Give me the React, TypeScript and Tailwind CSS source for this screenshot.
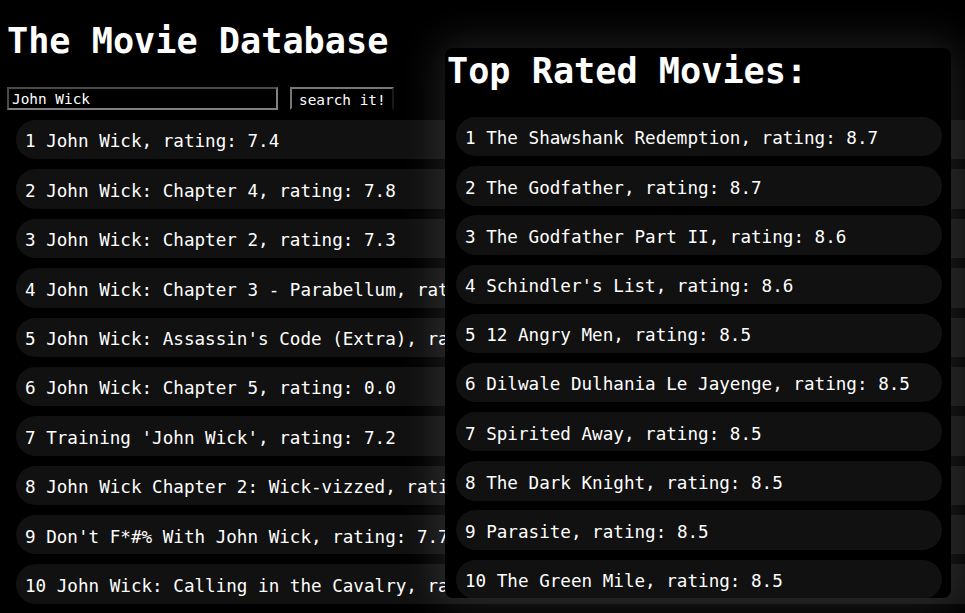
import React from 'react'

const searchResults = [
  { title: 'John Wick', rating: '7.4' },
  { title: 'John Wick: Chapter 4', rating: '7.8' },
  { title: 'John Wick: Chapter 2', rating: '7.3' },
  { title: 'John Wick: Chapter 3 - Parabellum', rating: '7.4' },
  { title: "John Wick: Assassin's Code (Extra)", rating: '6.9' },
  { title: 'John Wick: Chapter 5', rating: '0.0' },
  { title: "Training 'John Wick'", rating: '7.2' },
  { title: 'John Wick Chapter 2: Wick-vizzed', rating: '6.5' },
  { title: "Don't F*#% With John Wick", rating: '7.7' },
  { title: 'John Wick: Calling in the Cavalry', rating: '7.0' },
]

const topRated = [
  { title: 'The Shawshank Redemption', rating: '8.7' },
  { title: 'The Godfather', rating: '8.7' },
  { title: 'The Godfather Part II', rating: '8.6' },
  { title: "Schindler's List", rating: '8.6' },
  { title: '12 Angry Men', rating: '8.5' },
  { title: 'Dilwale Dulhania Le Jayenge', rating: '8.5' },
  { title: 'Spirited Away', rating: '8.5' },
  { title: 'The Dark Knight', rating: '8.5' },
  { title: 'Parasite', rating: '8.5' },
  { title: 'The Green Mile', rating: '8.5' },
]

function MovieRow({ n, title, rating }: { n: number; title: string; rating: string }) {
  return (
    <li className="flex items-center h-[39.4px] shrink-0 pl-[9px] pt-[4px] rounded-full bg-[#111111] text-[17.6px] leading-[1.164] text-white whitespace-nowrap overflow-hidden">
      {n} {title}, rating: {rating}
    </li>
  )
}

export default function App() {
  return (
    <div
      className="relative h-[613px] w-full overflow-hidden bg-black text-white"
      style={{ fontFamily: '"DejaVu Sans Mono", "Liberation Mono", monospace' }}
    >
      <h1 className="pt-[20.5px] pl-[7px] text-[35.2px] font-bold leading-[1.164]">The Movie Database</h1>

      <form className="flex mt-[25.5px] pl-[7px] gap-[12px]" onSubmit={e => e.preventDefault()}>
        <input
          defaultValue="John Wick"
          className="w-[271px] h-[23px] pl-[3px] pt-[1px] bg-black text-white text-[14.4px] border-2 border-t-[#4a4a4a] border-l-[#4a4a4a] border-b-[#808080] border-r-[#808080] outline-none"
        />
        <button
          type="submit"
          className="w-[104px] h-[23px] pl-[7px] pt-[1px] text-left bg-black text-white text-[14.4px] border-2 border-t-[#777777] border-l-[#777777] border-b-black border-r-[#1a1a1a]"
        >
          search it!
        </button>
      </form>

      <ul className="flex flex-col gap-[10px] mt-[10px] ml-[16px] -mr-[40px]">
        {searchResults.map((m, i) => (
          <MovieRow key={i} n={i + 1} title={m.title} rating={m.rating} />
        ))}
      </ul>

      <div className="absolute left-[445px] top-[48px] w-[506px] h-[550px] overflow-hidden rounded-lg bg-black shadow-[0_0_40px_6px_rgba(255,255,255,0.12)]">
        <h2 className="pt-[3px] pl-[2px] text-[35.2px] font-bold leading-[1.164]">Top Rated Movies:</h2>
        <ul className="flex flex-col gap-[9.8px] mt-[25px] pl-[11px] pr-[9px]">
          {topRated.map((m, i) => (
            <MovieRow key={i} n={i + 1} title={m.title} rating={m.rating} />
          ))}
        </ul>
      </div>
    </div>
  )
}
